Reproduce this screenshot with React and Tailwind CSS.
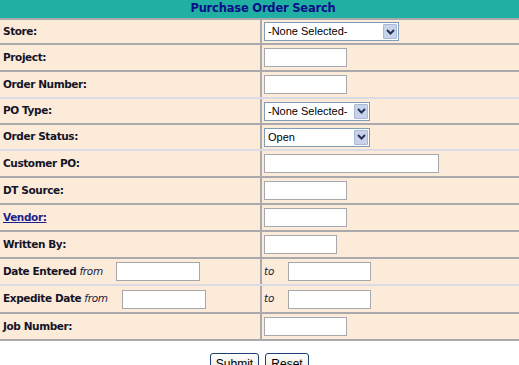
import React from 'react';

const GRAY = 'border-[#a9a9ae]';
const LIGHT = 'border-[#dcdbe3]';

const TextBox = ({ w }) => (
  <div className={`h-[19px] ${w} bg-white border border-[#a5a9ad]`} />
);

const Dropdown = ({ w, value }) => (
  <div className={`h-[19px] ${w} bg-white border border-[#7f9db9] flex items-stretch`}>
    <span className="flex-1 pl-[3px] text-[11px] leading-[17px] text-black font-['Liberation_Sans',Arial,sans-serif]">
      {value}
    </span>
    <span className="w-[14px] m-[1px] bg-[#c8d3ea] border border-[#a9b9d9] rounded-[1px] flex items-center justify-center">
      <svg width="9" height="6" viewBox="0 0 9 6">
        <path d="M1 1 L4.5 4.5 L8 1" fill="none" stroke="#28305a" strokeWidth="2" />
      </svg>
    </span>
  </div>
);

const Row = ({ label, h, line, children, link }) => (
  <div className={`flex ${h} border-b-2 ${line}`}>
    <div className="w-[262px] border-r-2 border-[#a9a9ae] flex items-center pl-[3px] text-[10.5px] font-bold tracking-[-0.4px] text-[#141428]">
      {link ? <span className="text-[#1f1f8c] underline">{label}</span> : label}
    </div>
    <div className="flex-1 flex items-center pl-[2px]">{children}</div>
  </div>
);

const DateRow = ({ label, h, line, gap }) => (
  <div className={`flex ${h} border-b-2 ${line}`}>
    <div className="w-[262px] border-r-2 border-[#a9a9ae] flex items-center pl-[3px] text-[10.5px] text-[#141428]">
      <span className="font-bold tracking-[-0.4px]">{label}</span>
      <span className="italic ml-[3px] tracking-[-0.3px] text-[#1d1d3a]">from</span>
      <div className={gap}>
        <TextBox w="w-[84px]" />
      </div>
    </div>
    <div className="flex-1 flex items-center pl-[2px]">
      <span className="italic text-[10.5px] w-[24px] text-[#1d1d3a]">to</span>
      <TextBox w="w-[83px]" />
    </div>
  </div>
);

const XpButton = ({ children, w }) => (
  <button className={`${w} h-[22px] border border-[#1c3f74] rounded-[3px] bg-gradient-to-b from-white to-[#e4e2d6] text-[12px] text-black font-['Liberation_Sans',Arial,sans-serif] leading-[18px]`}>
    {children}
  </button>
);

export default function App() {
  return (
    <div className="w-[519px] h-[365px] bg-white overflow-hidden font-['DejaVu_Sans',Verdana,sans-serif]">
      <div className="bg-[#fcebd9]">
        <div className="h-[20px] bg-[#20b0a3] border-b-2 border-[#a9a9ae] flex items-center justify-center pl-[7px]">
          <span className="text-[11.5px] font-bold text-[#0c0c88] tracking-[-0.2px]">Purchase Order Search</span>
        </div>
        <Row label="Store:" h="h-[25px]" line={GRAY}>
          <Dropdown w="w-[135px]" value="-None Selected-" />
        </Row>
        <Row label="Project:" h="h-[27px]" line={GRAY}>
          <TextBox w="w-[83px]" />
        </Row>
        <Row label="Order Number:" h="h-[27px]" line={LIGHT}>
          <TextBox w="w-[83px]" />
        </Row>
        <Row label="PO Type:" h="h-[26px]" line={GRAY}>
          <Dropdown w="w-[106px]" value="-None Selected-" />
        </Row>
        <Row label="Order Status:" h="h-[26px]" line={LIGHT}>
          <Dropdown w="w-[106px]" value="Open" />
        </Row>
        <Row label="Customer PO:" h="h-[27px]" line={GRAY}>
          <TextBox w="w-[175px]" />
        </Row>
        <Row label="DT Source:" h="h-[27px]" line={GRAY}>
          <TextBox w="w-[83px]" />
        </Row>
        <Row label="Vendor:" h="h-[27px]" line={GRAY} link>
          <TextBox w="w-[83px]" />
        </Row>
        <Row label="Written By:" h="h-[27px]" line={GRAY}>
          <TextBox w="w-[73px]" />
        </Row>
        <DateRow label="Date Entered" h="h-[27px]" line={LIGHT} gap="ml-[13px]" />
        <DateRow label="Expedite Date" h="h-[28px]" line={GRAY} gap="ml-[14px]" />
        <Row label="Job Number:" h="h-[27px]" line={GRAY}>
          <TextBox w="w-[83px]" />
        </Row>
      </div>
      <div className="flex justify-center gap-[6px] pt-[12px]">
        <XpButton w="w-[49px]">Submit</XpButton>
        <XpButton w="w-[44px]">Reset</XpButton>
      </div>
    </div>
  );
}
